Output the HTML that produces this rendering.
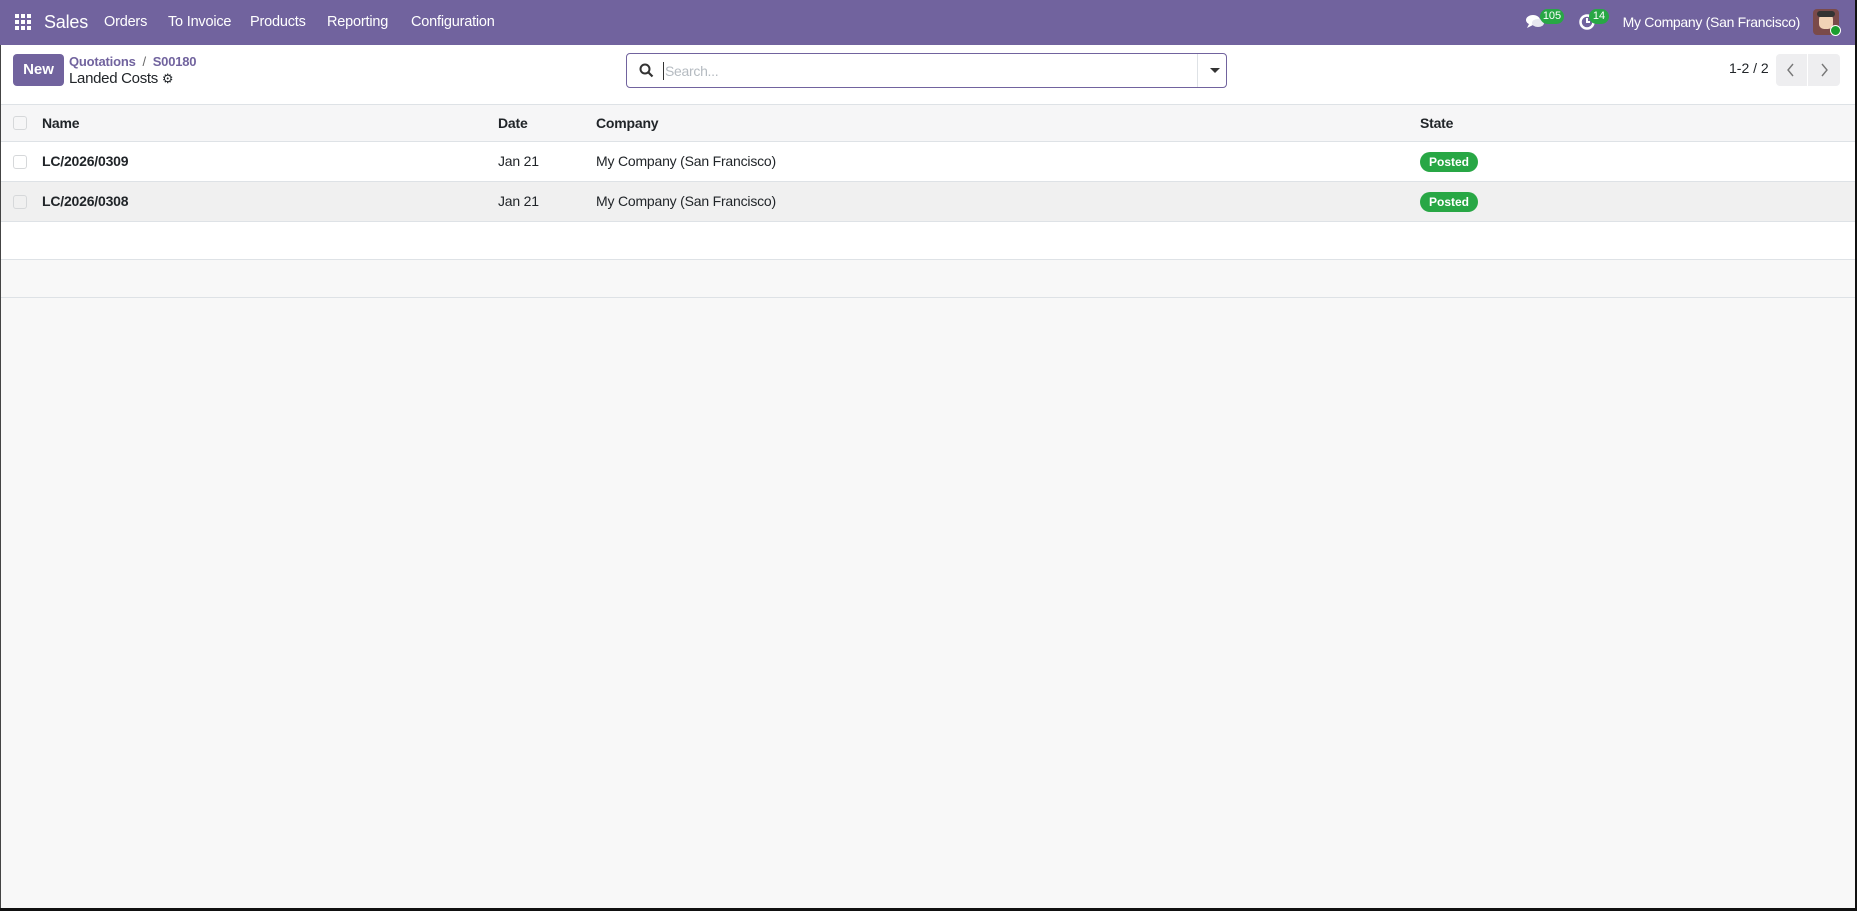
<!DOCTYPE html>
<html><head><meta charset="utf-8"><style>
*{box-sizing:border-box;margin:0;padding:0}
body{width:1857px;height:911px;overflow:hidden;background:#f8f8f8;font-family:"Liberation Sans",sans-serif;color:#212529;position:relative}
.nav{position:absolute;left:0;top:0;width:1857px;height:45px;background:#71639e;color:#fff}
.nav span{position:absolute;top:14px;font-size:14.5px;letter-spacing:-0.2px}
.cp{position:absolute;left:0;top:45px;width:1857px;height:59px;background:#fff}
.a{position:absolute}
.row{position:absolute;left:0;width:1857px;border-bottom:1px solid #dee2e6}
.cb{position:absolute;left:13px;width:14px;height:14px;border:1px solid #d6d8da;border-radius:3px;background:#fff}
.cell{position:absolute;font-size:14px;letter-spacing:-0.2px}
.badge{position:absolute;left:1420px;width:58px;height:20px;border-radius:10px;background:#28a745;color:#fff;font-size:12px;font-weight:bold;text-align:center;line-height:20px}
</style></head><body>
<div class="nav">
<svg class="a" style="left:15px;top:14px" width="16" height="16" viewBox="0 0 16 16" fill="#fff"><rect x="0" y="0" width="4" height="4"/><rect x="6" y="0" width="4" height="4"/><rect x="12" y="0" width="4" height="4"/><rect x="0" y="6" width="4" height="4"/><rect x="6" y="6" width="4" height="4"/><rect x="12" y="6" width="4" height="4"/><rect x="0" y="12" width="4" height="4"/><rect x="6" y="12" width="4" height="4"/><rect x="12" y="12" width="4" height="4"/></svg>
<span style="left:44px;top:12px;font-size:18px">Sales</span>
<span style="left:104px">Orders</span>
<span style="left:168px">To Invoice</span>
<span style="left:250px">Products</span>
<span style="left:327px">Reporting</span>
<span style="left:411px">Configuration</span>
<svg class="a" style="left:1525px;top:13px" width="20" height="18" viewBox="0 0 20 18" fill="#fff"><ellipse cx="8" cy="7" rx="7" ry="5"/><path d="M4 11 L2 15 L8 12Z"/><ellipse cx="13" cy="10" rx="6" ry="4" fill="#e8e8f0"/></svg>
<div class="a" style="left:1540px;top:9px;width:24px;height:15px;border-radius:8px;background:#28a745;font-size:11px;text-align:center;line-height:15px">105</div>
<svg class="a" style="left:1578px;top:13px" width="18" height="18" viewBox="0 0 18 18"><circle cx="9" cy="9" r="6.5" fill="none" stroke="#fff" stroke-width="2.5"/><path d="M9 5v4h3" stroke="#fff" stroke-width="2" fill="none"/></svg>
<div class="a" style="left:1589px;top:9px;width:20px;height:15px;border-radius:8px;background:#28a745;font-size:11px;text-align:center;line-height:15px">14</div>
<span style="right:57px;font-size:14px;letter-spacing:-0.3px">My Company (San Francisco)</span>
<div class="a" style="left:1813px;top:9px;width:26px;height:26px;border-radius:4px;background:#7a4a4a"><div style="position:absolute;left:6px;top:5px;width:14px;height:15px;background:#f1d2b6;border-radius:5px"></div><div style="position:absolute;left:4px;top:2px;width:18px;height:6px;background:#333;border-radius:4px"></div></div>
<div class="a" style="left:1830px;top:25px;width:11px;height:11px;border-radius:50%;background:#1a9e2e;border:1.5px solid #fff"></div>
</div>
<div class="cp">
<div class="a" style="left:13px;top:9px;width:51px;height:32px;background:#71639e;border-radius:4px;color:#fff;font-size:15px;font-weight:bold;text-align:center;line-height:32px">New</div>
<div class="a" style="left:69px;top:9px;font-size:13px;color:#71639e;font-weight:bold;letter-spacing:-0.2px">Quotations <span style="color:#666;font-weight:normal">&nbsp;/&nbsp;</span> S00180</div>
<div class="a" style="left:69px;top:25px;font-size:15px;letter-spacing:-0.3px">Landed Costs <span style="font-size:13px">&#9881;</span></div>
<div class="a" style="left:626px;top:8px;width:601px;height:35px;border:1px solid #71639e;border-radius:4px;background:#fff">
<svg class="a" style="left:12px;top:9px" width="15" height="15" viewBox="0 0 15 15"><circle cx="6" cy="6" r="4.5" fill="none" stroke="#333" stroke-width="2"/><path d="M9.5 9.5L13.5 13.5" stroke="#333" stroke-width="2.2"/></svg>
<div class="a" style="left:36px;top:8px;width:1px;height:18px;background:#333"></div>
<div class="a" style="left:38px;top:9px;font-size:14px;color:#b5bbc1;letter-spacing:-0.3px">Search...</div>
<div class="a" style="left:570px;top:0;width:1px;height:33px;background:#dee2e6"></div>
<div class="a" style="left:583px;top:14px;width:0;height:0;border-left:5px solid transparent;border-right:5px solid transparent;border-top:5px solid #333"></div>
</div>
<div class="a" style="left:1729px;top:15px;font-size:14px">1-2 / 2</div>
<div class="a" style="left:1776px;top:9px;width:64px;height:32px;background:#eeeef0;border-radius:4px"><div style="position:absolute;left:31px;top:0;width:1px;height:32px;background:#fff"></div>
<svg class="a" style="left:10px;top:9px" width="10" height="14" viewBox="0 0 10 14"><path d="M7 1L2 7l5 6" fill="none" stroke="#777" stroke-width="1.4"/></svg>
<svg class="a" style="left:43px;top:9px" width="10" height="14" viewBox="0 0 10 14"><path d="M3 1l5 6-5 6" fill="none" stroke="#777" stroke-width="1.4"/></svg></div>
</div>
<div class="row" style="top:104px;height:38px;background:#f6f6f7;border-top:1px solid #dee2e6">
<div class="cb" style="top:11px;background:#f6f6f7"></div>
<div class="cell" style="left:42px;top:10px;font-weight:bold">Name</div>
<div class="cell" style="left:498px;top:10px;font-weight:bold">Date</div>
<div class="cell" style="left:596px;top:10px;font-weight:bold">Company</div>
<div class="cell" style="left:1420px;top:10px;font-weight:bold">State</div>
</div>
<div class="row" style="top:142px;height:40px;background:#fff">
<div class="cb" style="top:13px"></div>
<div class="cell" style="left:42px;top:11px;font-weight:bold">LC/2026/0309</div>
<div class="cell" style="left:498px;top:11px">Jan 21</div>
<div class="cell" style="left:596px;top:11px">My Company (San Francisco)</div>
<div class="badge" style="top:10px">Posted</div>
</div>
<div class="row" style="top:182px;height:40px;background:#f0f0f0">
<div class="cb" style="top:13px;background:#f0f0f0"></div>
<div class="cell" style="left:42px;top:11px;font-weight:bold">LC/2026/0308</div>
<div class="cell" style="left:498px;top:11px">Jan 21</div>
<div class="cell" style="left:596px;top:11px">My Company (San Francisco)</div>
<div class="badge" style="top:10px">Posted</div>
</div>
<div class="row" style="top:222px;height:38px;background:#fff"></div>
<div class="row" style="top:260px;height:38px;background:#f8f8f8"></div>
<div class="a" style="left:0;top:45px;width:1px;height:866px;background:#444"></div>
<div class="a" style="left:1855px;top:0;width:2px;height:911px;background:#111"></div>
<div class="a" style="left:0;top:908px;width:1857px;height:3px;background:#111"></div>
</body></html>
